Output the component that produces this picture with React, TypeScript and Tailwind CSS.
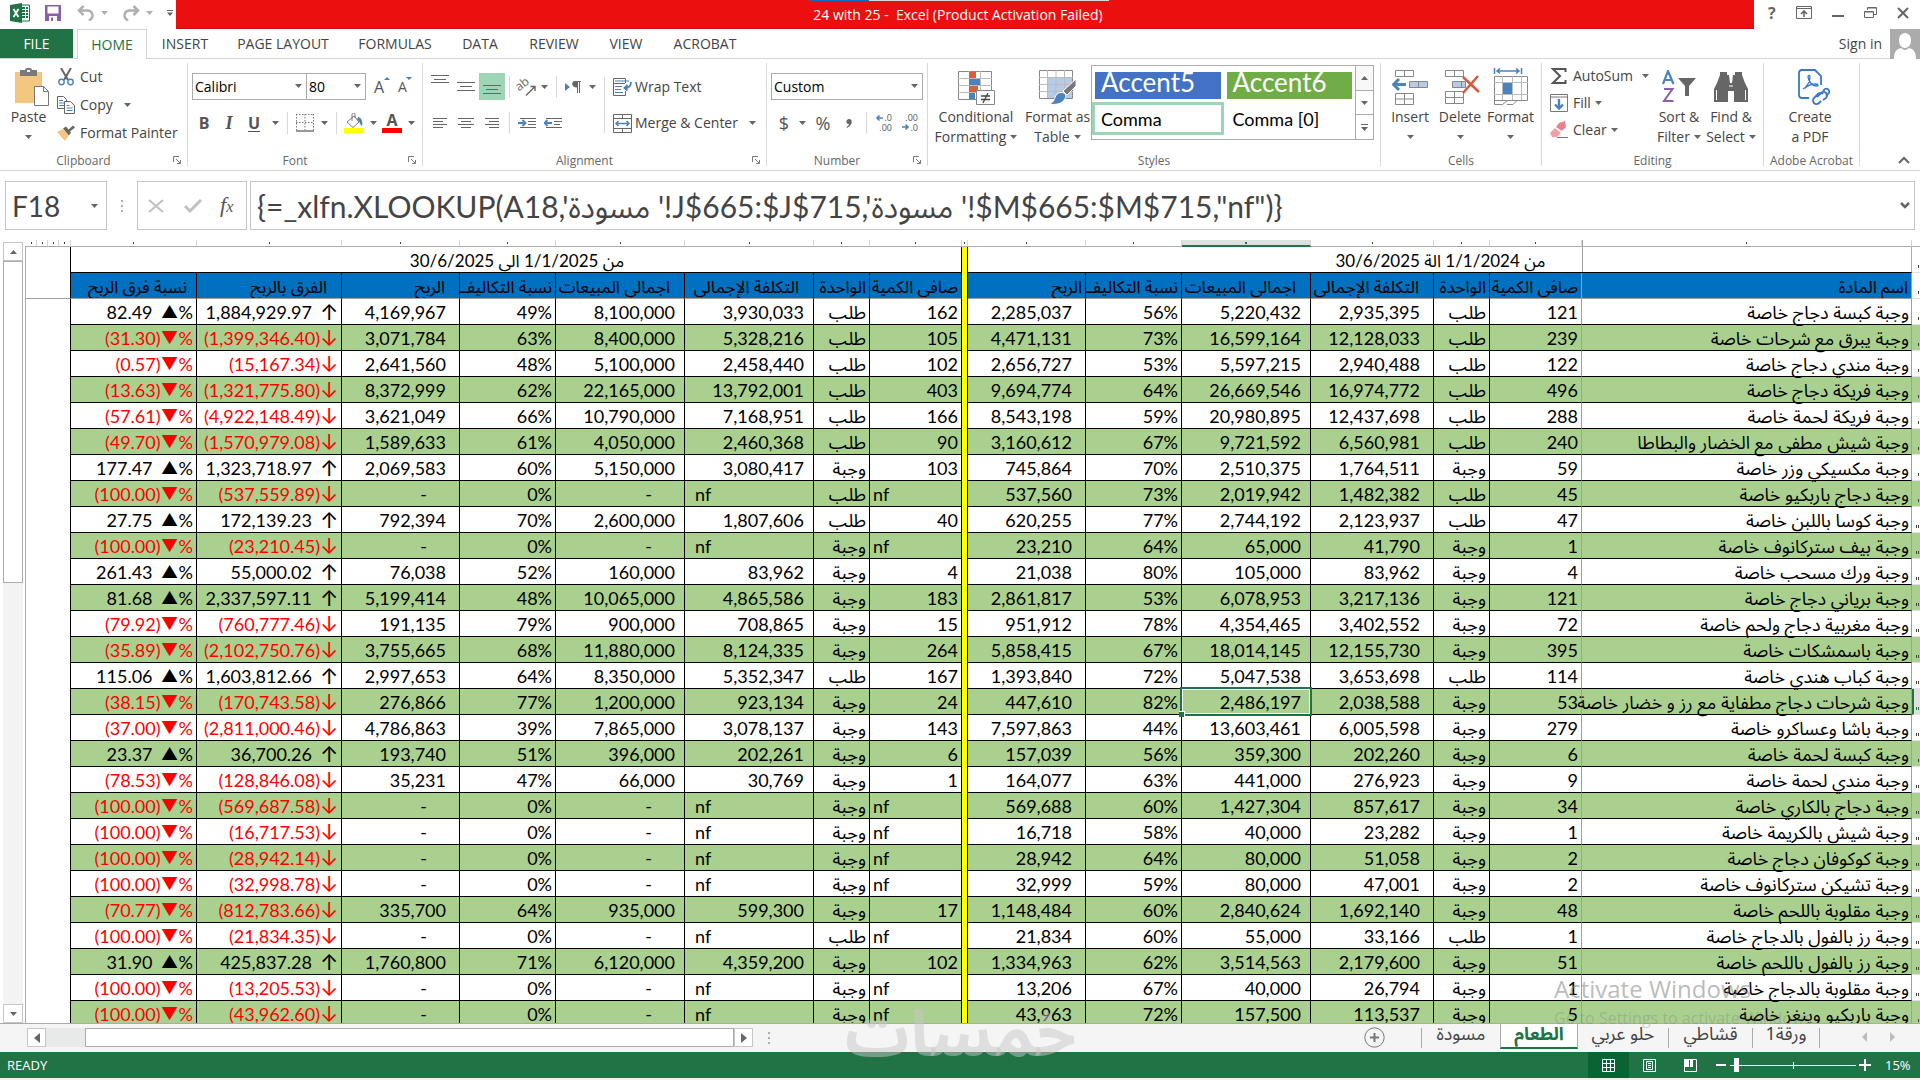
import type { ReactNode } from "react";
import clsx from "clsx";

type Row = {
  name: string;
  unit: string;
  y24: [qty: string, cost: string, sales: string, share: string, profit: string];
  y25: [qty: string, cost: string, sales: string, share: string, profit: string];
  diff: string;
  pct: string;
};

const MISSING: Row["y25"] = ["nf", "nf", "-", "0%", "-"];
const ORDER = "طلب";
const MEAL = "وجبة";

const ROWS: Row[] = [
  { name: "وجبة كبسة دجاج خاصة", unit: ORDER, y24: ["121", "2,935,395", "5,220,432", "56%", "2,285,037"], y25: ["162", "3,930,033", "8,100,000", "49%", "4,169,967"], diff: "1,884,929.97", pct: "82.49" },
  { name: "وجبة يبرق مع شرحات خاصة", unit: ORDER, y24: ["239", "12,128,033", "16,599,164", "73%", "4,471,131"], y25: ["105", "5,328,216", "8,400,000", "63%", "3,071,784"], diff: "(1,399,346.40)", pct: "(31.30)" },
  { name: "وجبة مندي دجاج خاصة", unit: ORDER, y24: ["122", "2,940,488", "5,597,215", "53%", "2,656,727"], y25: ["102", "2,458,440", "5,100,000", "48%", "2,641,560"], diff: "(15,167.34)", pct: "(0.57)" },
  { name: "وجبة فريكة دجاج خاصة", unit: ORDER, y24: ["496", "16,974,772", "26,669,546", "64%", "9,694,774"], y25: ["403", "13,792,001", "22,165,000", "62%", "8,372,999"], diff: "(1,321,775.80)", pct: "(13.63)" },
  { name: "وجبة فريكة لحمة خاصة", unit: ORDER, y24: ["288", "12,437,698", "20,980,895", "59%", "8,543,198"], y25: ["166", "7,168,951", "10,790,000", "66%", "3,621,049"], diff: "(4,922,148.49)", pct: "(57.61)" },
  { name: "وجبة شيش مطفى مع الخضار والبطاطا", unit: ORDER, y24: ["240", "6,560,981", "9,721,592", "67%", "3,160,612"], y25: ["90", "2,460,368", "4,050,000", "61%", "1,589,633"], diff: "(1,570,979.08)", pct: "(49.70)" },
  { name: "وجبة مكسيكي وزر خاصة", unit: MEAL, y24: ["59", "1,764,511", "2,510,375", "70%", "745,864"], y25: ["103", "3,080,417", "5,150,000", "60%", "2,069,583"], diff: "1,323,718.97", pct: "177.47" },
  { name: "وجبة دجاج باربكيو خاصة", unit: ORDER, y24: ["45", "1,482,382", "2,019,942", "73%", "537,560"], y25: MISSING, diff: "(537,559.89)", pct: "(100.00)" },
  { name: "وجبة كوسا باللبن خاصة", unit: ORDER, y24: ["47", "2,123,937", "2,744,192", "77%", "620,255"], y25: ["40", "1,807,606", "2,600,000", "70%", "792,394"], diff: "172,139.23", pct: "27.75" },
  { name: "وجبة بيف ستركانوف خاصة", unit: MEAL, y24: ["1", "41,790", "65,000", "64%", "23,210"], y25: MISSING, diff: "(23,210.45)", pct: "(100.00)" },
  { name: "وجبة ورك مسحب خاصة", unit: MEAL, y24: ["4", "83,962", "105,000", "80%", "21,038"], y25: ["4", "83,962", "160,000", "52%", "76,038"], diff: "55,000.02", pct: "261.43" },
  { name: "وجبة برياني دجاج خاصة", unit: MEAL, y24: ["121", "3,217,136", "6,078,953", "53%", "2,861,817"], y25: ["183", "4,865,586", "10,065,000", "48%", "5,199,414"], diff: "2,337,597.11", pct: "81.68" },
  { name: "وجبة مغربية دجاج ولحم خاصة", unit: MEAL, y24: ["72", "3,402,552", "4,354,465", "78%", "951,912"], y25: ["15", "708,865", "900,000", "79%", "191,135"], diff: "(760,777.46)", pct: "(79.92)" },
  { name: "وجبة باسمشكات خاصة", unit: MEAL, y24: ["395", "12,155,730", "18,014,145", "67%", "5,858,415"], y25: ["264", "8,124,335", "11,880,000", "68%", "3,755,665"], diff: "(2,102,750.76)", pct: "(35.89)" },
  { name: "وجبة كباب هندي خاصة", unit: ORDER, y24: ["114", "3,653,698", "5,047,538", "72%", "1,393,840"], y25: ["167", "5,352,347", "8,350,000", "64%", "2,997,653"], diff: "1,603,812.66", pct: "115.06" },
  { name: "وجبة شرحات دجاج مطفاية مع رز و خضار خاصة", unit: MEAL, y24: ["53", "2,038,588", "2,486,197", "82%", "447,610"], y25: ["24", "923,134", "1,200,000", "77%", "276,866"], diff: "(170,743.58)", pct: "(38.15)" },
  { name: "وجبة باشا وعساكرو خاصة", unit: MEAL, y24: ["279", "6,005,598", "13,603,461", "44%", "7,597,863"], y25: ["143", "3,078,137", "7,865,000", "39%", "4,786,863"], diff: "(2,811,000.46)", pct: "(37.00)" },
  { name: "وجبة كبسة لحمة خاصة", unit: MEAL, y24: ["6", "202,260", "359,300", "56%", "157,039"], y25: ["6", "202,261", "396,000", "51%", "193,740"], diff: "36,700.26", pct: "23.37" },
  { name: "وجبة مندي لحمة خاصة", unit: MEAL, y24: ["9", "276,923", "441,000", "63%", "164,077"], y25: ["1", "30,769", "66,000", "47%", "35,231"], diff: "(128,846.08)", pct: "(78.53)" },
  { name: "وجبة دجاج بالكاري خاصة", unit: MEAL, y24: ["34", "857,617", "1,427,304", "60%", "569,688"], y25: MISSING, diff: "(569,687.58)", pct: "(100.00)" },
  { name: "وجبة شيش بالكريمة خاصة", unit: MEAL, y24: ["1", "23,282", "40,000", "58%", "16,718"], y25: MISSING, diff: "(16,717.53)", pct: "(100.00)" },
  { name: "وجبة كوكوفان دجاج خاصة", unit: MEAL, y24: ["2", "51,058", "80,000", "64%", "28,942"], y25: MISSING, diff: "(28,942.14)", pct: "(100.00)" },
  { name: "وجبة تشيكن ستركانوف خاصة", unit: MEAL, y24: ["2", "47,001", "80,000", "59%", "32,999"], y25: MISSING, diff: "(32,998.78)", pct: "(100.00)" },
  { name: "وجبة مقلوبة باللحم خاصة", unit: MEAL, y24: ["48", "1,692,140", "2,840,624", "60%", "1,148,484"], y25: ["17", "599,300", "935,000", "64%", "335,700"], diff: "(812,783.66)", pct: "(70.77)" },
  { name: "وجبة رز بالفول بالدجاج خاصة", unit: ORDER, y24: ["1", "33,166", "55,000", "60%", "21,834"], y25: MISSING, diff: "(21,834.35)", pct: "(100.00)" },
  { name: "وجبة رز بالفول باللحم خاصة", unit: MEAL, y24: ["51", "2,179,600", "3,514,563", "62%", "1,334,963"], y25: ["102", "4,359,200", "6,120,000", "71%", "1,760,800"], diff: "425,837.28", pct: "31.90" },
  { name: "وجبة مقلوبة بالدجاج خاصة", unit: MEAL, y24: ["1", "26,794", "40,000", "67%", "13,206"], y25: MISSING, diff: "(13,205.53)", pct: "(100.00)" },
  { name: "وجبة باربكيو وينغز خاصة", unit: MEAL, y24: ["5", "113,537", "157,500", "72%", "43,963"], y25: MISSING, diff: "(43,962.60)", pct: "(100.00)" },
];

const SELECTED_ROW = 18;
const FIRST_DATA_ROW = 3;

function Caret({ className }: { className?: string }) {
  return (
    <svg viewBox="0 0 7 4" className={clsx("h-1 w-[7px] shrink-0 fill-[#666]", className)}>
      <path d="M0 0h7L3.500 4z" />
    </svg>
  );
}

function Sep({ className }: { className?: string }) {
  return <span className={clsx("w-px shrink-0 bg-[#d9d9d9]", className ?? "h-[22px]")} />;
}

/* ---------- title bar ---------- */

function ExcelLogo() {
  return (
    <svg viewBox="0 0 20 20" className="h-5 w-5">
      <path d="M10 2h9.500v16H10z" fill="#fff" stroke="#217346" />
      <path d="M12 5h3M16 5h2M12 8h3M16 8h2M12 11h3M16 11h2M12 14h3M16 14h2" stroke="#217346" strokeWidth="2" />
      <path d="M0 2l12-2v20L0 18z" fill="#217346" />
      <path d="M3.500 6l5 8M8.500 6l-5 8" stroke="#fff" strokeWidth="1.800" />
    </svg>
  );
}

function TitleBar() {
  return (
    <header className="flex h-[29px] shrink-0 bg-white">
      <div className="flex w-44 items-center pb-1 pl-2.5">
        <ExcelLogo />
        <button aria-label="Save" className="ml-[15px]">
          <svg viewBox="0 0 16 16" className="h-4 w-4">
            <path d="M0 0h16v16H0z" fill="#8a5fa8" />
            <path d="M2.500 1.500h11v7h-11zM4 11h8v5H4z" fill="#fff" />
            <path d="M6 12.500h2V16H6z" fill="#8a5fa8" />
          </svg>
        </button>
        <button aria-label="Undo" className="ml-4 flex items-center gap-1.5">
          <svg viewBox="0 0 18 16" className="h-4 w-[18px]" fill="none" stroke="#b0b0b0" strokeWidth="2.500">
            <path d="M6.500 1L2 5.500 6.500 10M2 5.500h9a5 5 0 0 1 3 8.500l-2 1.500" />
          </svg>
          <Caret className="fill-[#b0b0b0]" />
        </button>
        <button aria-label="Redo" className="ml-3.5 flex items-center gap-1.5">
          <svg viewBox="0 0 18 16" className="h-4 w-[18px]" fill="none" stroke="#b0b0b0" strokeWidth="2.500">
            <path d="M11.500 1L16 5.500 11.500 10M16 5.500H7a5 5 0 0 0-3 8.500l2 1.500" />
          </svg>
          <Caret className="fill-[#b0b0b0]" />
        </button>
        <button aria-label="Customize Quick Access Toolbar" className="ml-3.5">
          <svg viewBox="0 0 6 6" className="h-1.5 w-1.5 fill-[#666]">
            <path d="M0 0h6v1H0zM0 2.500h6L3 6z" />
          </svg>
        </button>
      </div>
      <div className="relative flex flex-1 items-center justify-center border-b border-[#c00d0d] bg-[#eb0f0f] pr-3.5 pt-0.5 text-sm text-white">
        <span className="absolute left-1/2 top-0 -ml-[156px] h-px w-[60px] bg-[#0f6cbd]" />
        <span className="absolute left-1/2 top-0 -ml-24 h-px w-60 bg-[#e0d5d5]" />
        <h1 className="whitespace-pre">24 with 25 -  Excel (Product Activation Failed)</h1>
      </div>
      <div className="flex w-[166px] items-center justify-between pb-1 pl-3.5 pr-[11px] text-[#666]">
        <button aria-label="Help" className="text-base font-bold leading-5">?</button>
        <button aria-label="Ribbon Display Options">
          <svg viewBox="0 0 16 13" className="h-[13px] w-4" fill="none" stroke="#666">
            <path d="M.5.5h15v12H.5zM.5 2.500h15" />
            <path d="M8 11V5M5 8l3-3 3 3" strokeWidth="1.600" />
          </svg>
        </button>
        <button aria-label="Minimize" className="pt-2">
          <svg viewBox="0 0 12 3" className="h-[3px] w-3 fill-[#666]">
            <path d="M0 0h12v2H0z" />
          </svg>
        </button>
        <button aria-label="Restore">
          <svg viewBox="0 0 13 13" className="h-[13px] w-[13px]" fill="none" stroke="#666">
            <path d="M3.500 4V1.500h9v7H10M3.500 2h9M.5 5.500h9v6h-9zM.5 6h9" />
          </svg>
        </button>
        <button aria-label="Close">
          <svg viewBox="0 0 12 12" className="h-3 w-3" stroke="#666" strokeWidth="2">
            <path d="M1 1l10 10M11 1L1 11" />
          </svg>
        </button>
      </div>
    </header>
  );
}

const TABS = [
  { label: "INSERT", width: "w-[76px]" },
  { label: "PAGE LAYOUT", width: "w-[120px]" },
  { label: "FORMULAS", width: "w-[104px]" },
  { label: "DATA", width: "w-[66px]" },
  { label: "REVIEW", width: "w-[82px]" },
  { label: "VIEW", width: "w-[62px]" },
  { label: "ACROBAT", width: "w-24" },
];

function RibbonTabs() {
  return (
    <nav className="flex h-[30px] shrink-0 border-b border-[#d4d4d4] bg-white text-sm text-[#444]">
      <button className="w-[73px] bg-[#217346] text-white">FILE</button>
      <button className="-mb-px ml-1 w-[70px] border border-b-0 border-[#d4d4d4] bg-white text-[#217346]">HOME</button>
      {TABS.map((tab) => (
        <button key={tab.label} className={clsx("whitespace-nowrap", tab.width)}>
          {tab.label}
        </button>
      ))}
      <button className="ml-auto mr-2">Sign in</button>
      <svg viewBox="0 0 30 30" className="h-[30px] w-[30px]">
        <path d="M0 0h30v30H0z" fill="#ababab" />
        <path d="M15 4c8 0 8 15 0 15S7 4 15 4zM4 30c0-8 3-10 7-11 3 2.500 5 2.500 8 0 4 1 7 3 7 11z" fill="#fff" />
      </svg>
    </nav>
  );
}

/* ---------- ribbon ---------- */

function Group({ label, width, launcher, children }: { label: string; width: string; launcher?: boolean; children: ReactNode }) {
  return (
    <section className={clsx("my-1 flex shrink-0 flex-col border-r border-[#d9d9d9]", width)}>
      <div className="flex flex-1">{children}</div>
      <div className={clsx("relative h-3.5 whitespace-nowrap text-center text-xs leading-[18px] text-[#666]", launcher && "pr-5")}>
        {label}
        {launcher && (
          <button aria-label={`${label} settings`} className="absolute right-1.5 top-1 block">
            <svg viewBox="0 0 8 8" className="h-2 w-2" fill="none" stroke="#777">
              <path d="M.5 6V.5H6M3 3l4 4M7.500 4v3.500H4" />
            </svg>
          </button>
        )}
      </div>
    </section>
  );
}

function BigButton({ icon, lines, caret, width }: { icon: ReactNode; lines: string[]; caret?: boolean; width: string }) {
  return (
    <button className={clsx("flex flex-col items-center self-start pt-1", width)}>
      <span className="flex h-10 items-center">{icon}</span>
      {lines.map((line, i) => (
        <span key={line} className="flex h-5 items-center gap-1 whitespace-nowrap leading-5">
          {line}
          {caret && i === 1 && <Caret />}
        </span>
      ))}
      {caret && lines.length === 1 && <Caret className="mt-2" />}
    </button>
  );
}

function SmallButton({ icon, label, caret, height = "h-7" }: { icon: ReactNode; label: string; caret?: string; height?: string }) {
  return (
    <button className={clsx("flex items-center gap-[5px] whitespace-nowrap", height)}>
      <span className="flex w-[18px] justify-center">{icon}</span>
      {label}
      {caret && <Caret className={caret} />}
    </button>
  );
}

function Combo({ label, value, width, options }: { label: string; value: string; width: string; options: string[] }) {
  return (
    <div className={clsx("relative h-[27px]", width)}>
      <select aria-label={label} defaultValue={value} className="h-full w-full appearance-none border border-[#ababab] bg-white pl-0.5 text-sm text-black">
        {options.map((o) => (
          <option key={o}>{o}</option>
        ))}
      </select>
      <Caret className="pointer-events-none absolute right-[5px] top-[11px]" />
    </div>
  );
}

function Lines({ d, className }: { d: string; className?: string }) {
  return (
    <svg viewBox="0 0 18 18" className={clsx("h-[18px] w-[18px]", className)} stroke="#666" strokeWidth="1">
      <path d={d} />
    </svg>
  );
}

function ClipboardGroup() {
  return (
    <Group label="Clipboard" width="w-[188px]" launcher>
      <BigButton
        width="w-[57px]"
        caret
        lines={["Paste"]}
        icon={
          <svg viewBox="0 0 36 40" className="ml-1.5 h-10 w-9">
            <path d="M1 5h27v31H1z" fill="#f3c77f" />
            <path d="M6 3h5c0-3 7-3 7 0h5v6H6z" fill="#7a7a7a" />
            <path d="M13 3h3v2h-3z" fill="#fff" />
            <path d="M20.500 19.500h9l5 5v14h-14z" fill="#fff" stroke="#777" />
            <path d="M29.500 19.500v5h5" fill="none" stroke="#777" />
          </svg>
        }
      />
      <div className="flex flex-col">
        <SmallButton
          label="Cut"
          icon={
            <svg viewBox="0 0 16 18" className="h-[18px] w-4" fill="none">
              <path d="M3 0l7 12M13 0L6 12" stroke="#666" strokeWidth="2" />
              <circle cx="3.500" cy="14" r="2.700" stroke="#4a82bd" strokeWidth="1.400" />
              <circle cx="12.500" cy="14" r="2.700" stroke="#4a82bd" strokeWidth="1.400" />
            </svg>
          }
        />
        <SmallButton
          label="Copy"
          caret="ml-1.5"
          icon={
            <svg viewBox="0 0 18 18" className="h-[18px] w-[18px]" fill="#fff" stroke="#666">
              <path d="M.5.5h6l3 3v9h-9z" />
              <path d="M2 4.500h4M2 7h5M2 9.500h5" stroke="#4a82bd" />
              <path d="M7.500 5.500h6l4 4v8h-10z" />
              <path d="M9.500 9.500h3M9.500 12h6M9.500 14.500h6" stroke="#4a82bd" />
            </svg>
          }
        />
        <SmallButton
          label="Format Painter"
          icon={
            <svg viewBox="0 0 18 16" className="h-4 w-[18px]">
              <path d="M0 7l6-3 6 6-4 6z" fill="#f3c77f" />
              <path d="M6 3.500l3-2 5 6-2 3z" fill="#666" />
              <path d="M11 5l5-4.500 2 2-5 4z" fill="#666" />
            </svg>
          }
        />
      </div>
    </Group>
  );
}

function FontGroup() {
  return (
    <Group label="Font" width="w-[235px]" launcher>
      <div className="flex flex-col gap-[9px] pl-1 pt-2.5">
        <div className="flex items-center">
          <Combo label="Font" value="Calibri" width="w-[115px]" options={["Calibri", "Arial", "Cambria"]} />
          <Combo label="Font size" value="80" width="-ml-px w-[60px]" options={["80", "72", "48", "11"]} />
          <button aria-label="Increase font size" className="relative ml-2 w-4 text-left text-base leading-5 text-[#555]">
            A
            <svg viewBox="0 0 6 3" className="absolute right-0 top-0 h-[3px] w-[6px] fill-[#4a82bd]"><path d="M0 3h6L3 0z" /></svg>
          </button>
          <button aria-label="Decrease font size" className="relative ml-2 w-4 text-left text-sm leading-5 text-[#555]">
            A
            <svg viewBox="0 0 6 3" className="absolute right-0.5 top-0 h-[3px] w-[6px] fill-[#4a82bd]"><path d="M0 0h6L3 3z" /></svg>
          </button>
        </div>
        <div className="flex h-7 items-center text-base text-[#555]">
          <button className="w-6 font-bold">B</button>
          <button className="w-[26px] text-lg font-bold italic [font-family:'Liberation_Serif',serif]">I</button>
          <button className="w-6 font-bold underline underline-offset-2">U</button>
          <Caret className="ml-1.5" />
          <Sep className="ml-2 h-[22px]" />
          <button aria-label="Borders" className="ml-2">
            <svg viewBox="0 0 18 18" className="h-[18px] w-[18px]" fill="none" stroke="#777">
              <path d="M.5 0v16M17.500 0v16M0 .5h18M9 0v16M0 8.500h18" strokeDasharray="1.500 1.500" />
              <path d="M0 17h18" strokeWidth="1.500" />
            </svg>
          </button>
          <Caret className="ml-[7px]" />
          <Sep className="ml-2 h-[22px]" />
          <button aria-label="Fill Color" className="ml-[7px]">
            <svg viewBox="0 0 20 20" className="h-5 w-5">
              <path d="M3 9l7-6 5 6-6 5.500z" fill="#fff" stroke="#777" />
              <path d="M8 8V1.500c0-2 3-2 3 0V5" fill="none" stroke="#777" />
              <path d="M14 4c4 1 5 5 4 9-2-1-2-5-5-6z" fill="#4a82bd" />
              <path d="M0 15h20v5H0z" fill="#ff0" />
            </svg>
          </button>
          <Caret className="ml-1.5" />
          <button aria-label="Font Color" className="ml-[5px] flex w-5 flex-col items-center font-bold leading-[15px]">
            A
            <span className="h-[5px] w-full bg-[#f00]" />
          </button>
          <Caret className="ml-1.5" />
        </div>
      </div>
    </Group>
  );
}

function AlignmentGroup() {
  return (
    <Group label="Alignment" width="w-[344px]" launcher>
      <div className="flex flex-col gap-[9px] pl-2 pt-2.5">
        <div className="flex h-[27px] items-center">
          <button aria-label="Top Align"><Lines d="M0 .5h18M3 4.500h12M0 7.500h18" className="mb-1.5" /></button>
          <button aria-label="Middle Align" className="ml-2"><Lines d="M0 4.500h18M3 8.500h12M0 12.500h18" /></button>
          <button aria-label="Bottom Align" aria-pressed className="ml-1 flex h-[27px] w-[26px] items-center justify-center bg-[#9fd5b7]">
            <Lines d="M0 7.500h18M3 11.500h12M0 15.500h18" />
          </button>
          <Sep className="ml-1 h-[22px]" />
          <button aria-label="Orientation" className="ml-[7px]">
            <svg viewBox="0 0 20 18" className="h-[18px] w-5 overflow-visible" fill="none" stroke="#666" strokeWidth="1.400">
              <text x="0" y="10" transform="rotate(-38 6 9)" fontSize="12" fill="#666" stroke="none">ab</text>
              <path d="M9 17.500l9-9M13.500 8.500H18V13" />
            </svg>
          </button>
          <Caret className="ml-1" />
          <Sep className="ml-2 h-[22px]" />
          <button aria-label="Text direction" className="ml-2">
            <svg viewBox="0 0 16 12" className="h-3 w-4">
              <path d="M0 2l5 4-5 4z" fill="#4a82bd" />
              <path d="M10 0h6v1h-1v11h-1V1h-1v11h-1V6.500C6 6.500 6 0 10 0z" fill="#666" />
            </svg>
          </button>
          <Caret className="ml-2" />
        </div>
        <div className="flex h-7 items-center">
          <button aria-label="Align Left"><Lines d="M2 4.500h14M2 7.500h10M2 10.500h14M2 13.500h10" /></button>
          <button aria-label="Center" className="ml-2"><Lines d="M1 4.500h16M4 7.500h10M1 10.500h16M4 13.500h10" /></button>
          <button aria-label="Align Right" className="ml-2"><Lines d="M2 4.500h14M6 7.500h10M2 10.500h14M6 13.500h10" /></button>
          <Sep className="ml-2 h-[22px]" />
          <button aria-label="Increase Indent" className="ml-2">
            <svg viewBox="0 0 18 12" className="h-3 w-[18px]" stroke="#666">
              <path d="M2 1.500h16M10 4.500h8M10 7.500h8M2 10.500h16" />
              <path d="M0 6h7M4.500 3L7.500 6l-3 3" fill="none" stroke="#4a82bd" strokeWidth="1.800" />
            </svg>
          </button>
          <button aria-label="Decrease Indent" className="ml-2">
            <svg viewBox="0 0 18 12" className="h-3 w-[18px]" stroke="#666">
              <path d="M2 1.500h16M10 4.500h8M10 7.500h6M2 10.500h16" />
              <path d="M8 6H1M3.500 3L.5 6l3 3" fill="none" stroke="#4a82bd" strokeWidth="1.800" />
            </svg>
          </button>
        </div>
      </div>
      <Sep className="ml-2 mt-3.5 h-14" />
      <div className="flex flex-col gap-[9px] pl-2 pt-2.5">
        <button className="flex h-[27px] items-center gap-[3px]">
          <svg viewBox="0 0 19 18" className="h-[18px] w-[19px]" fill="none" stroke="#666">
            <path d="M12.500 5V.5H.5v17h12V13M0 5.500h12" />
            <path d="M2 3h14M2 8.500h7M2 11.500h6M2 14.500h8" stroke="#4a82bd" />
            <path d="M18 4c0 4-2 6-6 6M14.500 7L11.500 10l3 2.500" stroke="#4a82bd" strokeWidth="1.800" />
          </svg>
          Wrap Text
        </button>
        <button className="flex h-7 items-center gap-[3px]">
          <svg viewBox="0 0 19 19" className="h-[19px] w-[19px]" fill="none" stroke="#666">
            <path d="M.5.5h18v18H.5zM.5 4.500h18M.5 14.500h18M9.500 0v4.500M9.500 14.500V19" />
            <path d="M3 9.500h13M5.500 7L3 9.500 5.500 12M13.500 7L16 9.500 13.500 12" stroke="#4a82bd" strokeWidth="1.500" />
          </svg>
          Merge &amp; Center
          <Caret className="ml-2" />
        </button>
      </div>
    </Group>
  );
}

function DecimalIcon({ rows, arrow }: { rows: [string, string]; arrow: "up" | "down" }) {
  return (
    <svg viewBox="0 0 18 18" className="h-[18px] w-[18px] overflow-visible" fontSize="9" fill="#555">
      <text x="17" y="7" textAnchor="end">{rows[0]}</text>
      <text x="17" y="17" textAnchor="end">{rows[1]}</text>
      <path
        d={arrow === "up" ? "M8 4H2M4.500 1.500L2 4l2.500 2.500" : "M1 13h6M4.500 10.500L7 13l-2.500 2.500"}
        fill="none"
        stroke="#4a82bd"
        strokeWidth="1.600"
      />
    </svg>
  );
}

function NumberGroup() {
  return (
    <Group label="Number" width="w-[161px]" launcher>
      <div className="flex flex-1 flex-col gap-[9px] px-1 pt-2.5">
        <Combo label="Number format" value="Custom" width="w-full" options={["Custom", "General", "Number"]} />
        <div className="flex h-7 items-center pl-1.5 text-lg text-[#555]">
          <button className="w-3.5">$</button>
          <Caret className="ml-2" />
          <button className="ml-2 w-[18px]">%</button>
          <button aria-label="Comma Style" className="ml-3.5">
            <svg viewBox="0 0 6 9" className="h-[9px] w-1.5 fill-[#666]">
              <path d="M3 0c4 0 4 6-2 9l-.5-1C2 7 3 6 3 5-1 5 0 0 3 0z" />
            </svg>
          </button>
          <Sep className="ml-3.5 h-[22px]" />
          <button aria-label="Increase Decimal" className="ml-2"><DecimalIcon rows={[".0", ".00"]} arrow="up" /></button>
          <button aria-label="Decrease Decimal" className="ml-2"><DecimalIcon rows={[".00", ".0"]} arrow="down" /></button>
        </div>
      </div>
    </Group>
  );
}

function StylesGroup() {
  const swatch = "mx-[3px] flex items-start overflow-hidden pl-1.5 text-[26px] leading-[21px] text-white";
  return (
    <Group label="Styles" width="w-[453px]">
      <BigButton
        width="w-24"
        caret
        lines={["Conditional", "Formatting"]}
        icon={
          <svg viewBox="0 0 37 36" className="h-9 w-[37px]" fill="none" stroke="#888">
            <path d="M.5 2.500h33v28H.5z" fill="#fff" />
            <path d="M0 9.500h34M0 16.500h34M0 23.500h34M11.500 2v28M22.500 2v28" stroke="#bbb" />
            <path d="M11 3h7v6h-7zM11 17h9v6h-9z" fill="#d95f3b" stroke="none" />
            <path d="M11 10h11v6H11zM11 24h6v6h-6z" fill="#4a82bd" stroke="none" />
            <path d="M18.500 21.500h18v14h-18z" fill="#fff" />
            <path d="M23 27h9M23 30.500h9M30 24l-5 10" stroke="#444" strokeWidth="1.300" />
          </svg>
        }
      />
      <BigButton
        width="w-[67px]"
        caret
        lines={["Format as", "Table"]}
        icon={
          <svg viewBox="0 0 38 36" className="h-9 w-[38px]" fill="none" stroke="#bbb">
            <path d="M.5 1.500h33v28H.5z" fill="#fff" stroke="#888" />
            <path d="M9 9h24v20H9z" fill="#b8cbe6" stroke="none" />
            <path d="M0 8.500h34M0 15.500h34M0 22.500h34M8.500 1v28M17 1v28M25.500 1v28" />
            <path d="M37 10v7L28 26l-4-4z" fill="#777" stroke="#fff" />
            <path d="M22 23.500c4 0 6 3 4 6-3 6-9 6-16 6 4-2 5-4 6-7 1-3 3-5 6-5z" fill="#4a82bd" stroke="#fff" />
          </svg>
        }
      />
      <div className="mt-0.5 flex h-[75px] w-[283px] border border-[#ababab] text-lg text-black [font-family:Lato,sans-serif]">
        <div className="grid flex-1 grid-cols-2 grid-rows-[27px_33px] gap-y-[3px] pt-1.5">
          <button className={clsx(swatch, "bg-[#4472c4]")}>Accent5</button>
          <button className={clsx(swatch, "bg-[#70ad47]")}>Accent6</button>
          <button className="border-3 border-[#9fd5b7] pl-1.5 text-left leading-6">Comma</button>
          <button className="pl-[9px] text-left leading-6">Comma [0]</button>
        </div>
        <div className="flex w-[18px] flex-col divide-y divide-[#ababab] border-l border-[#ababab]">
          <button aria-label="Scroll styles up" className="flex flex-1 items-center justify-center bg-[#f8f8f8]"><Caret className="w-[5px] rotate-180" /></button>
          <button aria-label="Scroll styles down" className="flex flex-1 items-center justify-center"><Caret className="w-[5px]" /></button>
          <button aria-label="More styles" className="flex flex-1 flex-col items-center justify-center gap-0.5">
            <span className="h-px w-[7px] bg-[#666]" />
            <Caret />
          </button>
        </div>
      </div>
    </Group>
  );
}

function CellsGroup() {
  return (
    <Group label="Cells" width="w-[161px]">
      <div className="flex pl-1">
        <BigButton
          width="w-[50px]"
          caret
          lines={["Insert"]}
          icon={
            <svg viewBox="0 0 36 38" className="h-[38px] w-9" fill="#fff" stroke="#888">
              <path d="M3.500 2.500h18v6h-18zM12.500 2.500v6M3.500 25.500h18v11h-18zM3.500 31h18M12.500 25.500v11" />
              <path d="M17.500 13.500h18v6h-18zM26.500 13.500v6" fill="#b8cbe6" />
              <path d="M14 16.500H2M7 11l-5.500 5.500L7 22" fill="none" stroke="#4a82bd" strokeWidth="3" />
            </svg>
          }
        />
        <BigButton
          width="w-[50px]"
          caret
          lines={["Delete"]}
          icon={
            <svg viewBox="0 0 36 38" className="ml-1 h-[38px] w-9" fill="#fff" stroke="#888">
              <path d="M1.500 2.500h18v6h-18zM10.500 2.500v6M1.500 23.500h18v12h-18zM1.500 29.500h18M10.500 23.500v12" />
              <path d="M8.500 13.500h13v6h-13zM17.500 13.500v6" fill="#b8cbe6" />
              <path d="M19 9l16 15M34 8L19 25" fill="none" stroke="#d9583b" strokeWidth="2.500" />
            </svg>
          }
        />
        <BigButton
          width="w-[51px]"
          caret
          lines={["Format"]}
          icon={
            <svg viewBox="0 0 36 38" className="h-[38px] w-9" fill="none" stroke="#888">
              <path d="M1.500 0v6M28.500 0v6M4 3h22M7 .5L4 3l3 2.500M23 .5L26 3l-3 2.500" stroke="#4a82bd" strokeWidth="1.500" />
              <path d="M1.500 8.500h33v24h-33zM1.500 32.500v4h8l5-4M14 36.500h6l4-4" />
              <path d="M1 14.500h34M1 26.500h34M9.500 8v24M19.500 8v24M28.500 8v24" stroke="#bbb" />
              <path d="M10 15h9v11h-9z" fill="#4a82bd" stroke="none" />
            </svg>
          }
        />
      </div>
    </Group>
  );
}

function EditingGroup() {
  return (
    <Group label="Editing" width="w-[222px]">
      <div className="flex w-[111px] shrink-0 flex-col pl-2">
        <SmallButton
          label="AutoSum"
          height="h-[26px]"
          caret="ml-1"
          icon={
            <svg viewBox="0 0 16 16" className="h-4 w-4" fill="none" stroke="#555" strokeWidth="2">
              <path d="M14.500 4V1H2l7 7-7 7h12.500v-3" />
            </svg>
          }
        />
        <SmallButton
          label="Fill"
          height="h-[27px]"
          caret="-ml-px"
          icon={
            <svg viewBox="0 0 18 18" className="h-[18px] w-[18px]" fill="none" stroke="#777">
              <path d="M.5.5h17v17H.5zM.5 3h17" />
              <path d="M9 5v9M5 10.500L9 14.500l4-4" stroke="#4a82bd" strokeWidth="2.400" />
            </svg>
          }
        />
        <SmallButton
          label="Clear"
          height="h-[27px]"
          caret="-ml-px"
          icon={
            <svg viewBox="0 0 18 17" className="h-[17px] w-[18px]">
              <path d="M7 16.500h11" stroke="#777" />
              <path d="M9 2l6-2 1 6-4 4-6-4z" fill="#e8838b" />
              <path d="M5 7l6 5-4 4H2l-2-4z" fill="#f0a0a5" />
            </svg>
          }
        />
      </div>
      <BigButton
        width="w-[52px]"
        caret
        lines={["Sort &", "Filter"]}
        icon={
          <svg viewBox="0 0 34 34" className="h-[34px] w-[34px]" fill="none">
            <path d="M1 14L6 1l5.500 13M3 10h6.500" stroke="#4a82bd" strokeWidth="2.200" />
            <path d="M2 19h8.500L2 31h9.500" stroke="#8a5fa8" strokeWidth="2" />
            <path d="M16 8h18l-7 8v10h-4V16z" fill="#666" />
          </svg>
        }
      />
      <BigButton
        width="w-[52px]"
        caret
        lines={["Find &", "Select"]}
        icon={
          <svg viewBox="0 0 34 32" className="h-8 w-[34px] fill-[#666]">
            <path d="M6 1h7v3h2l1 8h2l1-8h2V1h7v3l3 8 3 6v13H20V20h-6v11H0V18l3-6 3-8z" />
            <path d="M2.500 19v10M31.500 19v10M15 15h4" stroke="#fff" />
          </svg>
        }
      />
    </Group>
  );
}

function AcrobatGroup() {
  return (
    <Group label="Adobe Acrobat" width="w-24">
      <BigButton
        width="w-[92px]"
        lines={["Create", "a PDF"]}
        icon={
          <svg viewBox="0 0 32 36" className="ml-2 h-9 w-8" fill="none" stroke="#3b78cc" strokeWidth="1.800">
            <path d="M11 29H4c-2 0-3-1-3-3V4c0-2 1-3 3-3h13l6 6v9" />
            <path d="M5 20c3-1 7-7 7-12 0-2-2-2-2 0 1 5 4 9 9 9 2 0 1-2-1-2-5 0-9 2-11 4" strokeWidth="1.300" />
            <path d="M19 28l4-4a3.500 3.500 0 0 1 5 5l-3 2M25 25a3.500 3.500 0 0 0-5 0l-4 4a3.500 3.500 0 0 0 5 5l2-2" />
            <path d="M25 22l2-2a3 3 0 0 1 4 4l-3 3" />
          </svg>
        }
      />
    </Group>
  );
}

function Ribbon() {
  return (
    <div className="flex h-28 shrink-0 overflow-hidden border-b border-[#d4d4d4] bg-white text-sm text-[#444]">
      <ClipboardGroup />
      <FontGroup />
      <AlignmentGroup />
      <NumberGroup />
      <StylesGroup />
      <CellsGroup />
      <EditingGroup />
      <AcrobatGroup />
      <button aria-label="Collapse the Ribbon" className="mb-1.5 ml-auto mr-2.5 self-end">
        <svg viewBox="0 0 12 8" className="h-2 w-3" fill="none" stroke="#666" strokeWidth="2">
          <path d="M1 7l5-5 5 5" />
        </svg>
      </button>
    </div>
  );
}

/* ---------- formula bar ---------- */

function FormulaBar() {
  return (
    <div className="flex h-[69px] shrink-0 items-start bg-white px-[5px] pt-2.5 text-3xl leading-10 text-[#444] [font-family:Lato,'Noto_Sans_Arabic','DejaVu_Sans',sans-serif]">
      <div className="flex h-[49px] w-[102px] items-center border border-[#c6c6c6]">
        <input aria-label="Name Box" defaultValue="F18" className="w-20 pl-1.5 text-[28px] outline-none" />
        <Caret className="ml-[5px]" />
      </div>
      <span className="flex h-[49px] w-[30px] flex-col items-center justify-center gap-[3px]">
        <span className="h-0.5 w-0.5 bg-[#b0b0b0]" />
        <span className="h-0.5 w-0.5 bg-[#b0b0b0]" />
        <span className="h-0.5 w-0.5 bg-[#b0b0b0]" />
      </span>
      <div className="flex h-[49px] w-[110px] items-center border border-[#c6c6c6] pl-2.5">
        <button aria-label="Cancel">
          <svg viewBox="0 0 16 14" className="h-3.5 w-4" stroke="#c0c0c0" strokeWidth="2">
            <path d="M1 1l14 12M15 1L1 13" />
          </svg>
        </button>
        <button aria-label="Enter" className="ml-5">
          <svg viewBox="0 0 18 14" className="h-3.5 w-[18px]" fill="none" stroke="#c0c0c0" strokeWidth="3">
            <path d="M1 7l5 5L17 1" />
          </svg>
        </button>
        <button aria-label="Insert Function" className="ml-[18px] text-[22px] italic leading-6 text-[#555] [font-family:'Liberation_Serif',serif]">
          f<span className="text-base">x</span>
        </button>
      </div>
      <div className="ml-[3px] flex h-[49px] flex-1 items-center border border-[#c6c6c6] pr-1">
        <input
          aria-label="Formula"
          dir="ltr"
          defaultValue={`{=_xlfn.XLOOKUP(A18,'مسودة '!J$665:$J$715,'مسودة '!$M$665:$M$715,"nf")}`}
          className="min-w-0 flex-1 pl-1.5 outline-none"
        />
        <button aria-label="Expand Formula Bar">
          <svg viewBox="0 0 10 7" className="h-[7px] w-2.5" fill="none" stroke="#666" strokeWidth="2.500">
            <path d="M1 1l4 4 4-4" />
          </svg>
        </button>
      </div>
    </div>
  );
}

/* ---------- sheet ---------- */

const cell = "h-[26px] overflow-hidden whitespace-nowrap border-b border-r border-black p-0 pt-0.5";

function HeaderTick({ selected }: { selected?: boolean }) {
  return (
    <th
      scope="col"
      className={clsx(
        "h-[7px] border-r border-r-[#d4d4d4] p-0 align-top",
        selected ? "border-b-2 border-b-[#217346] bg-[#dfdfdf]" : "border-b border-b-[#ababab]",
      )}
    >
      <span className={clsx("mx-auto mt-0.5 block h-0.5", selected ? "w-0.5 bg-[#217346]" : "w-px bg-[#444]")} />
    </th>
  );
}

function GutterTicks() {
  return (
    <th className="h-[7px] border-b border-r border-b-[#ababab] border-r-[#d4d4d4] p-0 align-top">
      <span className="flex h-1.5 justify-end">
        {[0, 1, 2, 3].map((i) => (
          <span key={i} className={clsx("w-3 pt-0.5", i < 3 && "border-r border-[#d4d4d4]")}>
            <span className="mx-auto block h-0.5 w-px bg-[#444]" />
          </span>
        ))}
      </span>
    </th>
  );
}

function RowTick({ row }: { row: number }) {
  const selected = row === SELECTED_ROW;
  return (
    <th
      scope="row"
      className={clsx("h-[26px] border-b border-[#e0e0e0] p-0 align-bottom", selected && "border-l-2 border-l-[#217346] bg-[#dfdfdf]")}
    >
      <span className={clsx("mb-1 flex justify-end gap-px pr-px", selected ? "text-[#217346]" : "text-[#444]")}>
        <span className="h-[3px] w-px bg-current" />
        {row > 10 && row % 10 !== 0 && <span className="h-[3px] w-px bg-current" />}
      </span>
    </th>
  );
}

function Head({ children, pad = "pr-[3px]", edge = "border-r-black" }: { children: ReactNode; pad?: string; edge?: string }) {
  return (
    <th scope="col" className={clsx("h-[26px] overflow-hidden whitespace-nowrap border-b border-r border-b-[#a0a0a0] bg-[#0070c0] p-0 pt-px text-right text-[17px] font-normal", pad, edge)}>
      <span dir="rtl" className="float-right">{children}</span>
    </th>
  );
}

function Num({ value, pad }: { value: string; pad: string }) {
  return <td className={clsx(cell, "text-right", value === "-" ? "pr-8" : pad)}>{value}</td>;
}

function Change({ value, marks, markSize }: { value: string; marks: [up: string, down: string]; markSize: string }) {
  const down = value.startsWith("(");
  return (
    <td className={clsx(cell, down ? "text-[#f00]" : "text-black")}>
      <span className="flex items-center justify-end pr-[3px]">
        <span className={down ? "" : "pr-2"}>{value}</span>
        <span className={clsx("w-[18px] text-center leading-[23px] [font-family:Inter,'DejaVu_Sans',sans-serif]", markSize)}>{down ? marks[1] : marks[0]}</span>
        {marks[0] === "▲" && <span>%</span>}
      </span>
    </td>
  );
}

function DataRow({ row, index }: { row: Row; index: number }) {
  const number = index + FIRST_DATA_ROW;
  const [q24, c24, s24, p24, r24] = row.y24;
  const [q25, c25, s25, p25, r25] = row.y25;
  const missing = q25 === "nf";
  return (
    <tr className={index % 2 ? "bg-[#a9d08e]" : "bg-white"}>
      <td className="border-r border-black bg-white p-0" />
      <Change value={row.pct} marks={["▲", "▼"]} markSize="text-[17px]" />
      <Change value={row.diff} marks={["↑", "↓"]} markSize="text-[22px]" />
      <Num value={r25} pad="pr-[13px]" />
      <Num value={p25} pad="pr-[3px]" />
      <Num value={s25} pad="pr-[9px]" />
      <td className={clsx(cell, missing ? "pl-2.5 text-left" : "pr-[9px] text-right")}>{c25}</td>
      <td dir="rtl" className={clsx(cell, "pr-[3px] text-right")}>{row.unit}</td>
      <td className={clsx(cell, missing ? "pl-[3px] text-left" : "pr-[3px] text-right")}>{q25}</td>
      <td className="border-r border-black bg-[#ff0] p-0" />
      <Num value={r24} pad="pr-[13px]" />
      <Num value={p24} pad="pr-[3px]" />
      {number === SELECTED_ROW ? (
        <td className="relative h-[26px] whitespace-nowrap border-b border-r border-black p-0 pr-[9px] pt-0.5 text-right">
          {s24}
          <span className="absolute -bottom-0.5 -left-0.5 -right-0.5 -top-0.5 border-2 border-[#217346] shadow-[inset_0_0_0_1px_#fff]" />
          <span className="absolute -bottom-[3px] -left-[3px] h-1.5 w-1.5 border-r border-t border-white bg-[#217346]" />
        </td>
      ) : (
        <Num value={s24} pad="pr-[9px]" />
      )}
      <Num value={c24} pad="pr-[13px]" />
      <td dir="rtl" className={clsx(cell, "pr-[3px] text-right")}>{row.unit}</td>
      <td className="h-[26px] border-b border-r border-b-black border-r-[#a0a0a0] p-0 pr-[3px] pt-0.5 text-right">{q24}</td>
      <td dir="rtl" className="h-[26px] whitespace-nowrap border-b border-r border-b-black border-r-[#a0a0a0] p-0 pr-[3px] pt-0.5 text-right">{row.name}</td>
      <RowTick row={number} />
    </tr>
  );
}

function Sheet() {
  return (
    <table className="w-full table-fixed border-separate border-spacing-0 text-lg leading-[23px] text-black [font-family:Lato,'Noto_Sans_Arabic','DejaVu_Sans',sans-serif]">
      <colgroup>
        <col />
        <col className="w-[126px]" />
        <col className="w-[145px]" />
        <col className="w-[118px]" />
        <col className="w-24" />
        <col className="w-[129px]" />
        <col className="w-[129px]" />
        <col className="w-14" />
        <col className="w-[92px]" />
        <col className="w-1.5" />
        <col className="w-[118px]" />
        <col className="w-24" />
        <col className="w-[129px]" />
        <col className="w-[123px]" />
        <col className="w-14" />
        <col className="w-[92px]" />
        <col className="w-[330px]" />
        <col className="w-2" />
      </colgroup>
      <thead>
        <tr className="leading-none">
          <GutterTicks />
          {Array.from({ length: 16 }, (_, i) => (
            <HeaderTick key={i} selected={i === 11} />
          ))}
          <th className="h-[7px] border-b border-[#ababab] p-0" />
        </tr>
        <tr className="text-[17px]">
          <td className="h-[26px] border-r border-black p-0" />
          <th colSpan={8} scope="colgroup" dir="rtl" className="border-b border-r border-black p-0 pt-px font-normal">
            من 1/1/2025 الى 30/6/2025
          </th>
          <td className="border-r border-black bg-[#ff0] p-0" />
          <th colSpan={7} scope="colgroup" dir="rtl" className="relative border-b border-r border-b-black border-r-[#ababab] p-0 pt-px font-normal">
            من 1/1/2024 الة 30/6/2025
            <span className="absolute -top-[7px] bottom-0 right-[329px] w-px bg-[#a0a0a0]" />
          </th>
          <RowTick row={1} />
        </tr>
        <tr>
          <td className="h-[26px] border-b border-r border-b-[#a0a0a0] border-r-black p-0" />
          <Head pad="pr-[9px]">نسبة فرق الربح</Head>
          <Head pad="pr-3.5">الفرق بالربح</Head>
          <Head pad="pr-3.5">الربح</Head>
          <Head>نسبة التكاليف</Head>
          <Head pad="pr-3.5">اجمالي المبيعات</Head>
          <Head pad="pr-3.5">التكلفة الإجمالي</Head>
          <Head>الواحدة</Head>
          <Head>صافي الكمية</Head>
          <td className="border-r border-black bg-[#ff0] p-0" />
          <Head>الربح</Head>
          <Head>نسبة التكاليف</Head>
          <Head pad="pr-3.5">اجمالي المبيعات</Head>
          <Head pad="pr-3.5">التكلفة الإجمالي</Head>
          <Head>الواحدة</Head>
          <Head edge="border-r-[#a0a0a0]">صافي الكمية</Head>
          <Head edge="border-r-[#a0a0a0]">اسم المادة</Head>
          <RowTick row={2} />
        </tr>
      </thead>
      <tbody>
        {ROWS.map((row, i) => (
          <DataRow key={row.name} row={row} index={i} />
        ))}
      </tbody>
    </table>
  );
}

function Workspace() {
  return (
    <main className="flex min-h-0 flex-1 overflow-hidden bg-white">
      <div className="flex w-[25px] shrink-0 flex-col pl-[3px] pr-0.5 pt-0.5">
        <button aria-label="Scroll up" className="flex h-[19px] items-center justify-center border border-[#c6c6c6]">
          <Caret className="h-1.5 w-2.5 rotate-180" />
        </button>
        <div className="flex-1 bg-[#f3f3f3]">
          <div className="h-[322px] border border-[#ababab] bg-white" />
        </div>
        <button aria-label="Scroll down" className="flex h-[19px] items-center justify-center border border-[#c6c6c6] bg-white">
          <Caret className="h-1.5 w-2.5" />
        </button>
      </div>
      <div className="mt-1.5 w-px shrink-0 bg-[#ababab]" />
      <div className="min-w-0 flex-1 overflow-hidden">
        <Sheet />
      </div>
    </main>
  );
}

/* ---------- bottom bars ---------- */

function ScrollArrow({ label, d }: { label: string; d: string }) {
  return (
    <button aria-label={label} className="flex h-[19px] w-[19px] items-center justify-center border border-[#c6c6c6] bg-white">
      <svg viewBox="0 0 6 10" className="h-2.5 w-1.5 fill-[#666]">
        <path d={d} />
      </svg>
    </button>
  );
}

function SheetTabs() {
  const tab = "mt-1 flex h-5 items-start justify-center border-r border-[#ababab] leading-3";
  return (
    <div className="flex h-[29px] shrink-0 items-start border-t border-[#ababab] bg-[#f5f5f5] pl-[27px] text-lg leading-5 text-[#444] [font-family:'Noto_Sans_Arabic','DejaVu_Sans',sans-serif]">
      <div className="mt-1 flex">
        <ScrollArrow label="Scroll left" d="M6 0v10L0 5z" />
        <div className="flex w-[688px] bg-[#e8eaea] pl-[39px]">
          <div className="flex-1 border border-[#ababab] bg-white" />
        </div>
        <ScrollArrow label="Scroll right" d="M0 0v10l6-5z" />
        <span className="ml-[15px] flex flex-col items-center justify-center gap-[3px]">
          <span className="h-0.5 w-0.5 bg-[#b0b0b0]" />
          <span className="h-0.5 w-0.5 bg-[#b0b0b0]" />
          <span className="h-0.5 w-0.5 bg-[#b0b0b0]" />
        </span>
      </div>
      <button aria-label="New sheet" className="ml-auto mt-[3px]">
        <svg viewBox="0 0 21 21" className="h-[21px] w-[21px]" fill="none" stroke="#777">
          <circle cx="10.500" cy="10.500" r="9.700" />
          <path d="M10.500 6v9M6 10.500h9" strokeWidth="2" />
        </svg>
      </button>
      <span className="ml-9 mt-1 h-5 w-px bg-[#ababab]" />
      <button className="w-[78px]">مسودة</button>
      <button aria-current="page" className="flex h-[25px] w-[78px] items-start justify-center border-x border-b-2 border-x-[#ababab] border-b-[#217346] bg-white font-bold text-[#217346]">الطعام</button>
      <button className={clsx(tab, "w-[91px]")}>حلو عربي</button>
      <button className={clsx(tab, "w-[84px]")}>قشاطي</button>
      <button className={clsx(tab, "w-[67px]")}>ورقة1</button>
      <span className="mr-[25px] mt-2 flex w-[75px] justify-end gap-[23px]">
        <svg viewBox="0 0 5 10" className="h-2.5 w-[5px] fill-[#bbb]"><path d="M5 0v10L0 5z" /></svg>
        <svg viewBox="0 0 5 10" className="h-2.5 w-[5px] fill-[#bbb]"><path d="M0 0v10l5-5z" /></svg>
      </span>
    </div>
  );
}

function StatusBar() {
  return (
    <footer className="flex h-7 shrink-0 items-center border-b-2 border-[#f0f0f0] bg-[#217346] pl-[7px] text-[13px] text-white">
      <span>READY</span>
      <button aria-label="Normal" aria-pressed className="ml-auto flex h-full w-[41px] items-center justify-center bg-[#0a6332]">
        <svg viewBox="0 0 13 13" className="h-[13px] w-[13px]" fill="none" stroke="#fff">
          <path d="M.5.5h12v12H.5zM.5 4.500h12M.5 8.500h12M4.500.5v12M8.500.5v12" />
        </svg>
      </button>
      <button aria-label="Page Layout" className="flex w-[41px] justify-center">
        <svg viewBox="0 0 13 13" className="h-[13px] w-[13px]" fill="none" stroke="#fff">
          <path d="M.5.5h12v12H.5zM3.500 2.500h6v8h-6zM5 4.500h3M5 6.500h3M5 8.500h3" />
        </svg>
      </button>
      <button aria-label="Page Break Preview" className="flex w-[41px] justify-center">
        <svg viewBox="0 0 13 13" className="h-[13px] w-[13px]">
          <path d="M.5.5h12v12H.5z" fill="none" stroke="#fff" />
          <path d="M0 0h5v8H0zM6 0h3v8H6z" fill="#fff" />
        </svg>
      </button>
      <button aria-label="Zoom Out" className="ml-[5px] h-0.5 w-2.5 bg-white" />
      <div className="relative ml-1 flex w-[126px] items-center">
        <input
          type="range"
          aria-label="Zoom"
          min={10}
          max={190}
          defaultValue={16}
          className="h-px w-full appearance-none bg-white [&::-webkit-slider-thumb]:h-3.5 [&::-webkit-slider-thumb]:w-[5px] [&::-webkit-slider-thumb]:appearance-none [&::-webkit-slider-thumb]:bg-white"
        />
        <span className="absolute left-1/2 h-[7px] w-px bg-white" />
      </div>
      <button aria-label="Zoom In" className="ml-[3px]">
        <svg viewBox="0 0 12 12" className="h-3 w-3" stroke="#fff" strokeWidth="2">
          <path d="M6 0v12M0 6h12" />
        </svg>
      </button>
      <span className="ml-3.5 w-[35px]">15%</span>
    </footer>
  );
}

export default function App() {
  return (
    <div className="relative flex h-screen flex-col overflow-hidden bg-white text-sm [font-family:'Open_Sans','Noto_Sans',sans-serif]">
      <TitleBar />
      <RibbonTabs />
      <Ribbon />
      <FormulaBar />
      <Workspace />
      <SheetTabs />
      <StatusBar />
      <div className="pointer-events-none absolute bottom-[50px] right-[60px] w-[306px] text-[#777]/50">
        <p className="text-2xl leading-[34px]">Activate Windows</p>
        <p className="whitespace-nowrap text-base leading-6 text-[#777]/30">Go to Settings to activate Windows.</p>
      </div>
      <p dir="rtl" className="pointer-events-none absolute bottom-3.5 left-[44%] text-[64px] font-bold leading-[60px] text-[#c8c8c8]/50 [font-family:'Noto_Sans_Arabic','DejaVu_Sans',sans-serif]">خمسات</p>
    </div>
  );
}
